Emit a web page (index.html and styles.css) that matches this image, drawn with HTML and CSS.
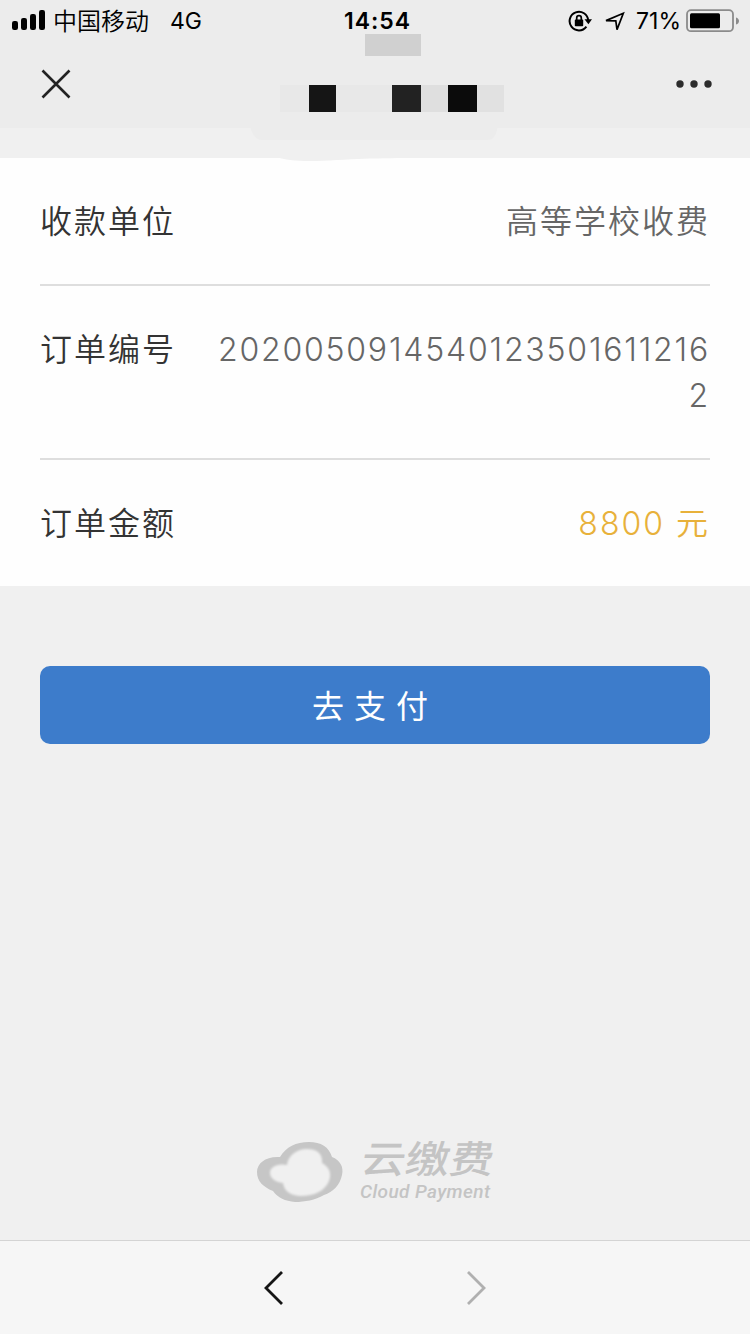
FILE: index.html
```
<!DOCTYPE html>
<html lang="zh-CN">
<head>
    <meta charset="UTF-8">
    <meta name="viewport" content="width=device-width, initial-scale=1.0">
    <title>云缴费</title>
    <link rel="stylesheet" href="styles.css">
</head>
<body>
    <header class="header">
        <div class="status-bar">
            <div class="status-left">
                <svg class="signal" width="34" height="20" viewBox="0 0 34 20">
                    <rect x="0" y="11" width="6" height="9" rx="2.2"/>
                    <rect x="9" y="8" width="6" height="12" rx="2.2"/>
                    <rect x="18" y="4" width="6" height="16" rx="2.2"/>
                    <rect x="27" y="0" width="6" height="20" rx="2.2"/>
                </svg>
                <span class="carrier">中国移动</span>
                <span class="network">4G</span>
            </div>
            <div class="time">14:54</div>
            <div class="status-right">
                <svg width="24" height="24" viewBox="0 0 24 24">
                    <path d="M20.2 11.5A9.3 9.3 0 1 0 18.4 17.6" fill="none" stroke="#000" stroke-width="2"/>
                    <path d="M16.5 10.3H24l-3.6 5z"/>
                    <rect x="6.8" y="10.6" width="8.4" height="6.6" rx=".8"/>
                    <path d="M8.7 11V8.9a2.3 2.3 0 0 1 4.6 0V11" fill="none" stroke="#000" stroke-width="1.7"/>
                </svg>
                <svg class="location" width="20" height="20" viewBox="0 0 20 20">
                    <path d="M1 9.6L18.3 2.2 12 18.6 10.8 9.8z" fill="none" stroke="#000" stroke-width="1.7"/>
                </svg>
                <span class="percent">71%</span>
                <svg class="battery" width="54" height="24" viewBox="0 0 54 24">
                    <rect x="1" y="1.2" width="46" height="21" rx="4" fill="none" stroke="#8b8b8b" stroke-width="1.8"/>
                    <rect x="4" y="4.2" width="30" height="15" rx="1.5"/>
                    <path d="M50 8.5c4 1 4 6 0 7z" fill="#8b8b8b"/>
                </svg>
            </div>
        </div>
        <div class="nav-bar">
            <svg width="32" height="32" viewBox="0 0 32 32">
                <path d="M2.5 2.5l27 27M29.5 2.5l-27 27" stroke="#222" stroke-width="2.6"/>
            </svg>
            <svg width="38" height="10" viewBox="0 0 38 10" fill="#2c2c2c">
                <circle cx="5" cy="5" r="3.7"/>
                <circle cx="19" cy="5" r="3.7"/>
                <circle cx="33" cy="5" r="3.7"/>
            </svg>
        </div>
        <!-- masked title -->
        <svg class="mask" width="260" height="130" viewBox="0 0 260 130" shape-rendering="crispEdges">
            <path d="M5 92h248c-2 10-5 14-10 14H18C10 106 7 100 5 92z" fill="#ececec" shape-rendering="auto"/>
            <path d="M32 123h190c-70 1-90 1-130 3-30 2-50 1-60-3z" fill="#f0f0f0" shape-rendering="auto"/>
            <rect x="120" y="0" width="56" height="22" fill="#d0d0d0"/>
            <rect x="35" y="51" width="29" height="27" fill="#e8e8e8"/>
            <rect x="64" y="51" width="27" height="27" fill="#151515"/>
            <rect x="91" y="51" width="56" height="27" fill="#e8e8e8"/>
            <rect x="147" y="51" width="29" height="27" fill="#222"/>
            <rect x="176" y="51" width="27" height="27" fill="#dfdfdf"/>
            <rect x="203" y="51" width="29" height="27" fill="#0b0b0b"/>
            <rect x="232" y="51" width="27" height="27" fill="#e1e1e1"/>
        </svg>
    </header>

    <main class="content">
        <div class="order">
            <div class="row">
                <span class="label">收款单位</span>
                <span class="value">高等学校收费</span>
            </div>
            <div class="row">
                <span class="label">订单编号</span>
                <span class="value number">20200509145401235016112162</span>
            </div>
            <div class="row">
                <span class="label">订单金额</span>
                <span class="value amount">8800 元</span>
            </div>
        </div>

        <button type="button" class="pay-button">去支付</button>

        <div class="brand">
            <svg width="88" height="64" viewBox="0 0 88 64">
                <defs>
                    <filter id="soft" x="-20%" y="-20%" width="140%" height="140%">
                        <feGaussianBlur stdDeviation="1.3"/>
                    </filter>
                </defs>
                <path d="M24 17C30 7 40 2 53 2c12 0 20 5 23 15 8 3 12 10 10 18-2 10-9 17-18 20-9 5-19 7-29 7-10-1-17-4-22-11C7 47 1 41 1 32c0-9 9-16 23-15z" fill="#c6c6c6"/>
                <path d="M31 25c1-9 9-16 20-16 9 0 16 4 15 14 7 4 10 10 7 18-4 10-15 15-28 15-10 0-17-5-18-13-8-1-13-5-13-10 0-6 7-10 17-8z" fill="#f0f0f0" filter="url(#soft)"/>
            </svg>
            <div class="brand-text">
                <div class="brand-name">云缴费</div>
                <div class="brand-en">Cloud Payment</div>
            </div>
        </div>
    </main>

    <footer class="toolbar">
        <svg width="22" height="36" viewBox="0 0 22 36">
            <path d="M19 2L3 18l16 16" fill="none" stroke="#151515" stroke-width="2.8"/>
        </svg>
        <svg width="22" height="36" viewBox="0 0 22 36">
            <path d="M3 2l16 16L3 34" fill="none" stroke="#b0b0b0" stroke-width="2.8"/>
        </svg>
    </footer>
</body>
</html>
```

FILE: styles.css
```
* {
    box-sizing: border-box;
}

body {
    margin: 0;
    height: 1334px;
    display: flex;
    flex-direction: column;
    background: #f0f0f0;
    font-family: Inter, "Noto Sans CJK SC", sans-serif;
    overflow: hidden;
}

svg {
    display: block;
    flex-shrink: 0;
}

.header {
    position: relative;
    height: 128px;
    background: #ececec;
}

.status-bar {
    display: grid;
    grid-template-columns: 1fr auto 1fr;
    align-items: center;
    height: 40px;
    padding: 1px 10px 0 12px;
    font-size: 23px;
    color: #000;
}

.status-left,
.status-right {
    display: flex;
    align-items: center;
}

.status-right {
    justify-content: flex-end;
}

.signal {
    margin-top: -2px;
}

.carrier {
    margin-left: 7px;
    padding-top: 2px;
    font-size: 24px;
    font-weight: 350;
    line-height: 38px;
}

.network {
    margin-left: 21px;
}

.time {
    padding-left: 3px;
    font-weight: 600;
    letter-spacing: 1px;
}

.location {
    margin: 0 11px 0 13px;
}

.battery {
    margin-left: 5px;
}

.nav-bar {
    display: flex;
    align-items: center;
    justify-content: space-between;
    height: 88px;
    padding: 0 37px 0 40px;
}

.mask {
    position: absolute;
    left: 245px;
    top: 34px;
}

.content {
    flex: 1;
    display: flex;
    flex-direction: column;
    padding-top: 30px;
}

.order {
    padding: 0 40px;
    background: #fefefe;
}

.row {
    display: flex;
    justify-content: space-between;
    padding: 41px 0 39px;
    border-bottom: 2px solid #dedede;
    font-size: 32px;
    font-weight: 350;
    line-height: 46px;
    letter-spacing: 2px;
}

.row:last-child {
    border-bottom: none;
}

.label {
    color: #333;
}

.value {
    width: 500px;
    text-align: right;
    word-break: break-all;
    color: #666;
}

.number {
    letter-spacing: 1.8px;
}

.amount {
    color: #e8b13a;
}

.pay-button {
    height: 78px;
    margin: 80px 40px 0;
    padding: 0 0 2px;
    border: none;
    border-radius: 10px;
    background: #3d7ccb;
    color: #fff;
    font-family: inherit;
    font-size: 32px;
    font-weight: 400;
    letter-spacing: 10px;
}

.brand {
    display: flex;
    align-items: center;
    gap: 16px;
    margin: auto 0 36px 256px;
    color: #c4c4c4;
}

.brand-name {
    margin: 0 0 2px 2px;
    font-size: 38px;
    font-weight: 500;
    line-height: 38px;
    transform: scaleX(1.16) skewX(-8deg);
    transform-origin: left;
}

.brand-en {
    font-family: Roboto, sans-serif;
    font-size: 19px;
    font-style: italic;
    font-weight: 500;
    line-height: 24px;
    letter-spacing: 0.4px;
}

.toolbar {
    display: flex;
    justify-content: center;
    align-items: center;
    gap: 180px;
    height: 94px;
    border-top: 1px solid #d4d4d4;
    background: #f6f6f6;
}
```
